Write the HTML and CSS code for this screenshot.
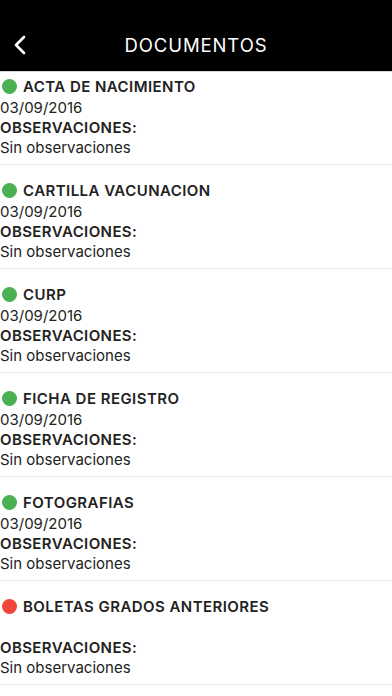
FILE: index.html
```html
<!DOCTYPE html>
<html lang="es">
<head>
    <meta charset="UTF-8">
    <meta name="viewport" content="width=device-width, initial-scale=1.0">
    <title>Documentos</title>
    <link rel="stylesheet" href="styles.css">
</head>
<body>
    <header class="topbar">
        <button class="back" aria-label="Regresar">
            <svg width="14" height="20" viewBox="0 0 14 20">
                <path d="M11 2 L3 10 L11 18" fill="none" stroke="#fff" stroke-width="2.6" stroke-linecap="round" stroke-linejoin="round"/>
            </svg>
        </button>
        <h1>DOCUMENTOS</h1>
    </header>

    <ul class="doc-list">
        <li class="doc">
            <div class="doc-title"><span class="dot ok"></span>ACTA DE NACIMIENTO</div>
            <div class="doc-date">03/09/2016</div>
            <div class="doc-label">OBSERVACIONES:</div>
            <div class="doc-note">Sin observaciones</div>
        </li>
        <li class="doc">
            <div class="doc-title"><span class="dot ok"></span>CARTILLA VACUNACION</div>
            <div class="doc-date">03/09/2016</div>
            <div class="doc-label">OBSERVACIONES:</div>
            <div class="doc-note">Sin observaciones</div>
        </li>
        <li class="doc">
            <div class="doc-title"><span class="dot ok"></span>CURP</div>
            <div class="doc-date">03/09/2016</div>
            <div class="doc-label">OBSERVACIONES:</div>
            <div class="doc-note">Sin observaciones</div>
        </li>
        <li class="doc">
            <div class="doc-title"><span class="dot ok"></span>FICHA DE REGISTRO</div>
            <div class="doc-date">03/09/2016</div>
            <div class="doc-label">OBSERVACIONES:</div>
            <div class="doc-note">Sin observaciones</div>
        </li>
        <li class="doc">
            <div class="doc-title"><span class="dot ok"></span>FOTOGRAFIAS</div>
            <div class="doc-date">03/09/2016</div>
            <div class="doc-label">OBSERVACIONES:</div>
            <div class="doc-note">Sin observaciones</div>
        </li>
        <li class="doc">
            <div class="doc-title"><span class="dot missing"></span>BOLETAS GRADOS ANTERIORES</div>
            <div class="doc-date"></div>
            <div class="doc-label">OBSERVACIONES:</div>
            <div class="doc-note">Sin observaciones</div>
        </li>
    </ul>
</body>
</html>
```

FILE: styles.css
```css
body {
    font-family: 'Inter', 'Liberation Sans', sans-serif;
    margin: 0;
    padding: 0;
    background: #ffffff;
    color: #222222;
    height: 696px;
    overflow: hidden;
}

.topbar {
    position: relative;
    z-index: 2;
    height: 71px;
    background: #000000;
    display: flex;
    align-items: center;
    justify-content: center;
    border-bottom: 1px solid #d6d6d6;
}

.topbar h1 {
    margin: 18px 0 0;
    font-size: 18.5px;
    font-weight: normal;
    letter-spacing: 0.9px;
    color: #ffffff;
}

.back {
    position: absolute;
    left: 13px;
    top: 35px;
    background: none;
    border: none;
    padding: 0;
    width: 14px;
    height: 20px;
    cursor: pointer;
}

.back svg {
    display: block;
}

/* list is scrolled a bit under the bar */
.doc-list {
    list-style: none;
    margin: -11px 0 0;
    padding: 0;
}

.doc {
    height: 83px;
    padding: 14px 0 6px;
    border-bottom: 1px solid #e6e6e6;
}

.doc-title {
    display: flex;
    align-items: center;
    height: 22px;
    font-size: 15px;
    font-weight: 600;
    letter-spacing: 0.45px;
    color: #222222;
}

.dot {
    width: 15px;
    height: 15px;
    border-radius: 50%;
    margin: 0 6px 0 2px;
    flex-shrink: 0;
}

.dot.ok {
    background: #4caf50;
}

.dot.missing {
    background: #f1443a;
}

.doc-date {
    height: 21px;
    line-height: 21px;
    font-size: 15px;
    color: #222222;
}

.doc-label {
    line-height: 20px;
    font-size: 15px;
    font-weight: 600;
    letter-spacing: 0.4px;
}

.doc-note {
    line-height: 20px;
    font-size: 15px;
}
```
